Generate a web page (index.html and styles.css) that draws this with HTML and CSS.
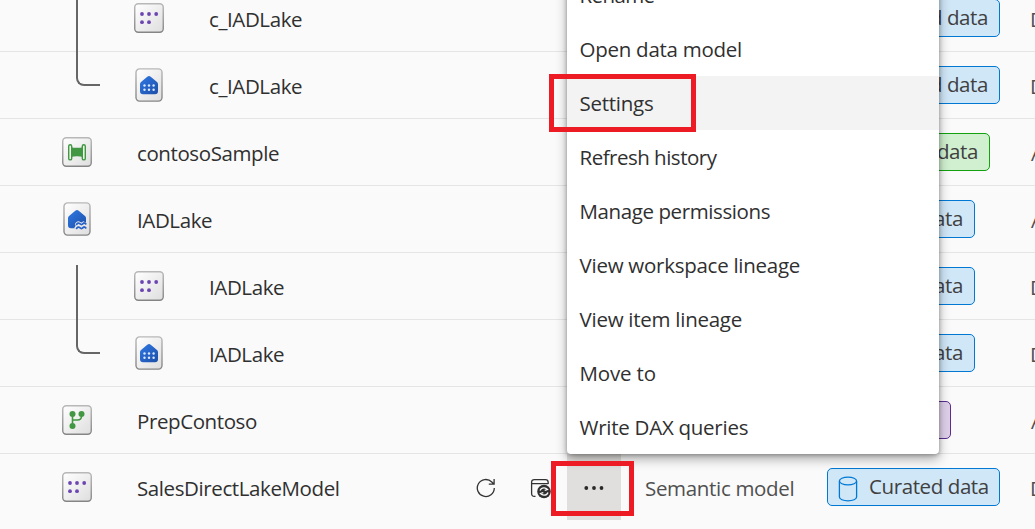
FILE: index.html
```
<!DOCTYPE html>
<html lang="en">
<head>
<meta charset="utf-8">
<title>Workspace items</title>
<link rel="stylesheet" href="styles.css">
</head>
<body>
<svg class="defs" width="0" height="0" aria-hidden="true">
  <defs>
    <linearGradient id="tile" x1="0" y1="0" x2="1" y2="1"><stop offset="0" stop-color="#fff"/><stop offset="1" stop-color="#dedede"/></linearGradient>
    <linearGradient id="edge" x1="0" y1="0" x2="0" y2="1"><stop offset="0" stop-color="#b8b8b8"/><stop offset="1" stop-color="#858585"/></linearGradient>
    <linearGradient id="blue" x1="0" y1="0" x2="1" y2="1"><stop offset="0" stop-color="#2f78e4"/><stop offset="1" stop-color="#1d4fa8"/></linearGradient>
    <symbol id="model" viewBox="0 0 30 30">
      <rect x=".75" y=".75" width="28.5" height="28.5" rx="3.5" fill="url(#tile)" stroke="url(#edge)" stroke-width="1.4"/>
      <g fill="#6b45b0"><circle cx="8" cy="11" r="1.9"/><circle cx="15" cy="11" r="1.9"/><circle cx="22.2" cy="11" r="1.9"/><circle cx="8" cy="19.2" r="1.9"/><circle cx="15" cy="19.2" r="1.9"/></g>
    </symbol>
    <symbol id="endpoint" viewBox="0 0 28 34">
      <rect x="1" y=".9" width="26" height="32.2" rx="3.5" fill="url(#tile)" stroke="url(#edge)" stroke-width="1.4"/>
      <path d="M5 16.2q0-1.3 1-2.1l6.300-5.300q1.700-1.400 3.400 0l6.300 5.300q1 .8 1 2.100v7q0 3-3 3H8q-3 0-3-3z" fill="url(#blue)"/>
      <g fill="#d9e9ff"><circle cx="9.500" cy="17.500" r="1.200"/><circle cx="14" cy="17.500" r="1.200"/><circle cx="18.600" cy="17.500" r="1.200"/><circle cx="9.500" cy="21.800" r="1.200"/><circle cx="14" cy="21.800" r="1.200"/><circle cx="18.600" cy="21.800" r="1.200"/></g>
    </symbol>
    <symbol id="lake" viewBox="0 0 28 34">
      <rect x="1" y=".9" width="26" height="32.2" rx="3.5" fill="url(#tile)" stroke="url(#edge)" stroke-width="1.4"/>
      <path d="M5 16.2q0-1.3 1-2.1l6.3-5.3q1.7-1.4 3.4 0l6.3 5.3q1 .8 1 2.1v4.600l-2.500-1.500-2.200 1.200-2.500-1.200q-3.200.2-4 3.200q1.800 1-.4 2.700l.4 1H8q-3 0-3-3z" fill="url(#blue)"/>
      <path d="M13.200 22.900q1.900-2.900 3.600-1.200t3.200 0t3.200.7M13.200 26.900q1.900-2.900 3.600-1.200t3.200 0t3.200.7" fill="none" stroke="#2a63c8" stroke-width="1.800"/>
    </symbol>
    <symbol id="spool" viewBox="0 0 30 30">
      <rect x=".75" y=".75" width="28.5" height="28.5" rx="3.5" fill="url(#tile)" stroke="url(#edge)" stroke-width="1.4"/>
      <path d="M8.500 10.200q6.500 1.300 13 0v9.800q-6.500-1.300-13 0z" fill="#419742"/>
      <g fill="#eef6ec" stroke="#419742" stroke-width="1.400"><rect x="6.700" y="7.700" width="3" height="15.200" rx="1.500"/><rect x="20.300" y="7.700" width="3" height="15.200" rx="1.500"/></g>
    </symbol>
    <symbol id="branch" viewBox="0 0 30 30">
      <rect x=".75" y=".75" width="28.5" height="28.5" rx="3.5" fill="url(#tile)" stroke="url(#edge)" stroke-width="1.4"/>
      <path d="M10.500 9v12M19.500 9v2q0 4-4 4h-5" fill="none" stroke="#419742" stroke-width="1.600"/>
      <g fill="#419742"><circle cx="10.500" cy="9" r="3"/><circle cx="19.500" cy="9" r="3"/><circle cx="10.500" cy="21" r="3"/></g>
    </symbol>
  </defs>
</svg>
<main class="workspace">
  <div class="row"><div class="icon nested"><svg class="square"><use href="#model"/></svg></div><div class="name nested">c_IADLake</div><div class="tag blue">d data</div><div class="owner">D</div></div>
  <div class="row"><div class="icon nested"><svg class="tall"><use href="#endpoint"/></svg></div><div class="name nested">c_IADLake</div><div class="tag blue">d data</div><div class="owner">D</div></div>
  <div class="row"><div class="icon"><svg class="square"><use href="#spool"/></svg></div><div class="name">contosoSample</div><div class="tag green">data</div><div class="owner a">A</div></div>
  <div class="row"><div class="icon"><svg class="tall"><use href="#lake"/></svg></div><div class="name">IADLake</div><div class="tag blue short">data</div><div class="owner a">A</div></div>
  <div class="row"><div class="icon nested"><svg class="square"><use href="#model"/></svg></div><div class="name nested">IADLake</div><div class="tag blue short">data</div><div class="owner">D</div></div>
  <div class="row"><div class="icon nested"><svg class="tall"><use href="#endpoint"/></svg></div><div class="name nested">IADLake</div><div class="tag blue short">data</div><div class="owner">D</div></div>
  <div class="row"><div class="icon"><svg class="square"><use href="#branch"/></svg></div><div class="name">PrepContoso</div><div class="tag purple"></div><div class="owner a">A</div></div>
  <div class="row last">
    <div class="icon"><svg class="square"><use href="#model"/></svg></div><div class="name">SalesDirectLakeModel</div>
    <div class="actions">
      <svg class="refresh" viewBox="0 0 20 20"><path d="M18.300 10A8.500 8.500 0 1 1 15.800 4l2 2M18.100 1v5.200h-5.300" fill="none" stroke="#333" stroke-width="1.300"/></svg>
      <svg class="schedule" viewBox="0 0 22 22"><path d="M5.500 18.300H4.400Q1.600 18.300 1.600 15.500V4.400Q1.600 1.600 4.400 1.600H15.400Q18.200 1.600 18.200 4.400V6M1.600 5.700H18.200" fill="none" stroke="#333" stroke-width="1.300"/><circle cx="14" cy="13.500" r="6.800" fill="#303030"/><path d="M10 12.600q1.300-3 4.200-2.800 1.800.1 3.300 1.700l-2.800.9M18 14.400q-1.300 3-4.200 2.800-1.800-.1-3.300-1.700l2.800-.9" fill="none" stroke="#fafafa" stroke-width="1.300"/></svg>
      <div class="more"><svg viewBox="0 0 20 6"><g fill="#292929"><circle cx="2.300" cy="3" r="1.900"/><circle cx="10" cy="3" r="1.900"/><circle cx="17.500" cy="3" r="1.900"/></g></svg></div>
    </div>
    <div class="type">Semantic model</div>
    <div class="tag blue full"><svg viewBox="0 0 20 26"><path d="M1.400 5v16c0 2.200 3.900 3.800 8.600 3.800s8.600-1.600 8.600-3.800V5" fill="none" stroke="#0078d4" stroke-width="1.300"/><ellipse cx="10" cy="5" rx="8.600" ry="3.900" fill="none" stroke="#0078d4" stroke-width="1.300"/></svg><span>Curated data</span></div><div class="owner">D</div>
  </div>
  <div class="branch-line first"></div>
  <div class="branch-line second"></div>
  <nav class="menu">
    <div class="item rename">Rename</div>
    <div class="item">Open data model</div>
    <div class="item selected">Settings</div>
    <div class="item history">Refresh history</div>
    <div class="item permissions">Manage permissions</div>
    <div class="item">View workspace lineage</div>
    <div class="item">View item lineage</div>
    <div class="item move">Move to</div>
    <div class="item">Write DAX queries</div>
  </nav>
  <div class="callout settings-callout"></div>
  <div class="callout more-callout"></div>
</main>
</body>
</html>
```
FILE: styles.css
```
* { box-sizing: border-box; }
body { margin: 0; background: #fafafa; color: #303030; font: 20.5px/28px "Open Sans", "Noto Sans", sans-serif; letter-spacing: -.4px; }
.defs { position: absolute; }
svg { display: block; flex: none; }
.workspace { position: relative; width: 1035px; height: 529px; overflow: hidden; }
.row { display: grid; grid-template-columns: 62px 75px 329px 179px 182px 204px 1fr; height: 67px; align-items: center; border-bottom: 1px solid #e5e5e5; white-space: nowrap; }
.row:first-child { margin-top: -15px; }
.row.last { height: 75px; padding-bottom: 9px; border: 0; }
.icon { grid-column: 2; grid-row: 1; display: flex; width: 30px; justify-content: center; }
.icon.nested { margin-left: 72px; }
.square { width: 30px; height: 30px; }
.tall { width: 28px; height: 34px; }
.name { grid-column: 3; grid-row: 1; padding-top: 1px; }
.name.nested { padding-left: 72px; }
.actions { grid-column: 4; grid-row: 1; display: flex; align-items: center; height: 66px; padding-left: 10px; }
.refresh { width: 20px; height: 20px; margin-top: 2px; }
.schedule { width: 22px; height: 22px; margin: 4px 0 0 34px; }
.more { display: flex; width: 54px; height: 66px; margin-left: 15px; align-items: center; justify-content: center; background: #e1dfdd; }
.more svg { width: 20px; height: 6px; margin-top: 2px; }
.type { grid-column: 5; grid-row: 1; color: #505050; padding-top: 1px; letter-spacing: -.32px; }
.tag { grid-column: 6; grid-row: 1; display: flex; width: 173px; height: 38px; align-items: center; justify-content: flex-end; padding: 0 11px 2px; border: 1px solid #0078d4; border-radius: 5px; color: #404040; }
.tag.blue { background: #d0e7f8; }
.tag.green { width: 163px; background: #d0f0d0; border-color: #13a10e; }
.tag.blue.short { width: 148px; }
.tag.purple { width: 124px; background: #dfd0ea; border-color: #5c2e91; }
.tag.full { justify-content: flex-start; }
.tag svg { width: 20px; height: 26px; margin: 5px 11px 0 -1px; }
.owner { grid-column: 7; grid-row: 1; color: #505050; padding-top: 1px; margin-left: -1px; }
.owner.a { margin-left: 0; }
.branch-line { position: absolute; left: 76px; width: 24px; border: solid #666; border-width: 0 0 2px 2px; border-bottom-left-radius: 8px; }
.first { top: -10px; height: 96px; }
.second { top: 265px; height: 89px; }
.menu { position: absolute; left: 567px; top: -32px; width: 372px; height: 486px; background: #fff; border-radius: 0 0 4px 4px; box-shadow: 0 5px 12px rgba(0,0,0,.32), 0 1px 4px rgba(0,0,0,.3); letter-spacing: -.26px; }
.item { display: flex; height: 54px; align-items: center; padding: 0 0 1px 12.5px; white-space: nowrap; }
.rename { letter-spacing: -.6px; }
.history { letter-spacing: -.5px; }
.permissions { letter-spacing: -.4px; }
.move { letter-spacing: -.15px; }
.selected { background: #f3f3f3; }
.callout { position: absolute; border: 5px solid #ed1c24; }
.settings-callout { left: 549px; top: 74px; width: 147px; height: 58px; }
.more-callout { left: 551px; top: 461px; width: 83px; height: 55px; }
```
